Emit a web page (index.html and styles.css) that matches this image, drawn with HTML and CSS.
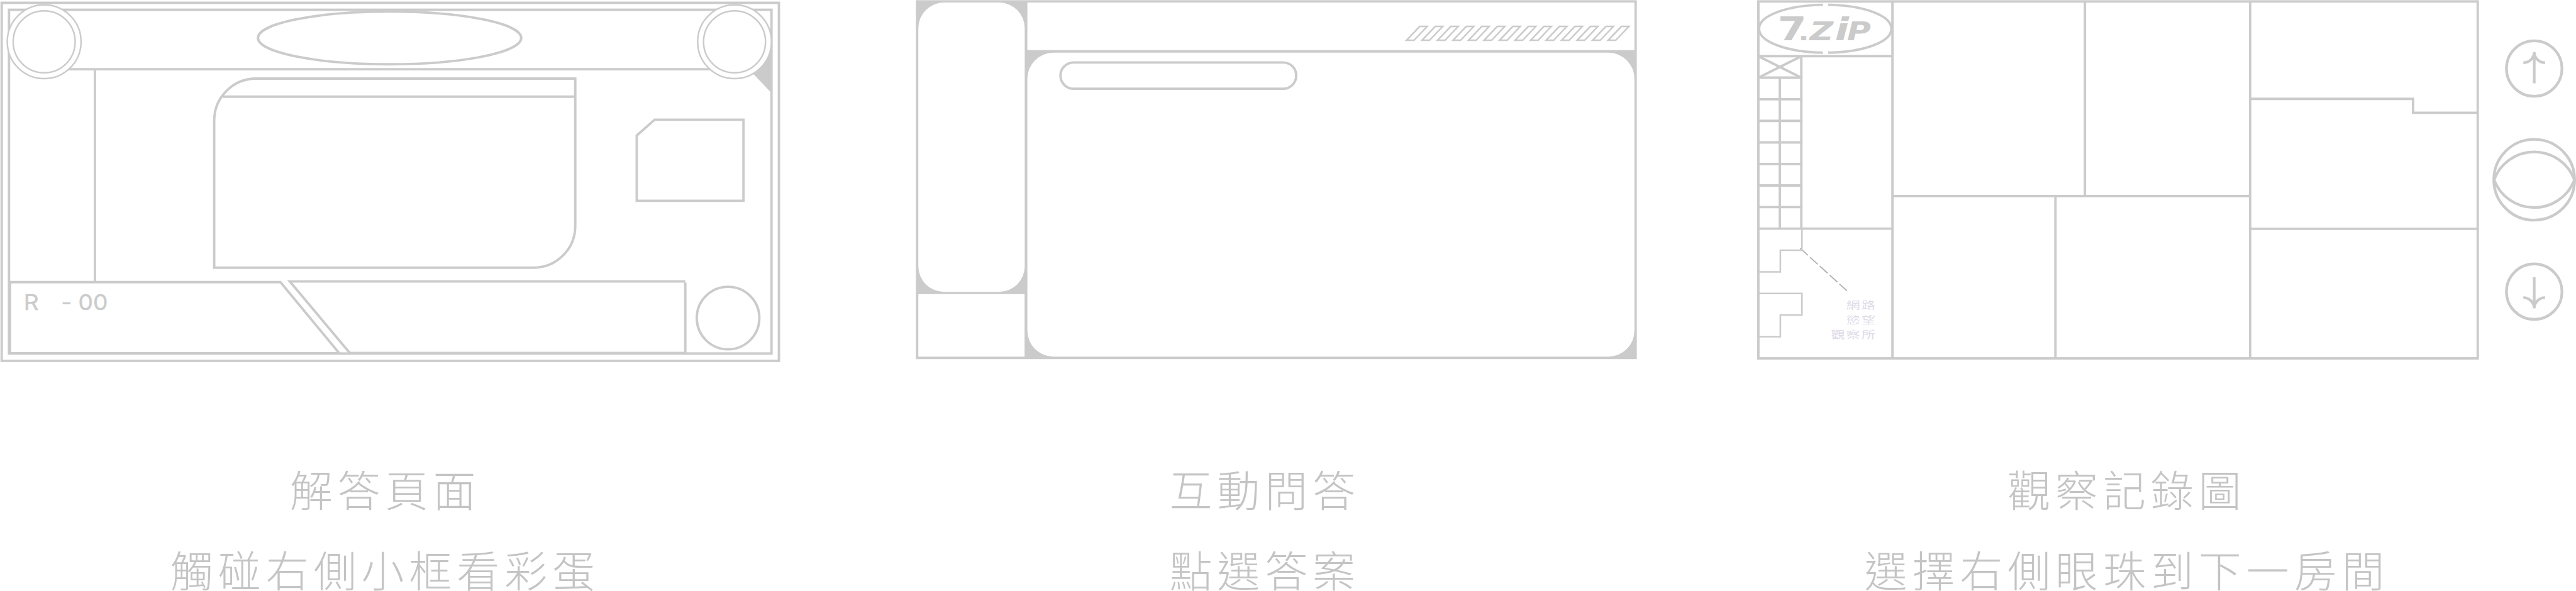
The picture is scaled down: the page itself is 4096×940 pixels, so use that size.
FILE: index.html
```
<!DOCTYPE html>
<html lang="zh-Hant">
<head>
<meta charset="utf-8">
<title>7.ZIP</title>
<link rel="stylesheet" href="styles.css">
</head>
<body>
<main class="guide">
  <figure class="step step-answer">
    <svg class="wire" viewBox="0 0 2078 820">
      <rect x="3.8" y="6.4" width="1763.6" height="812.6"/>
      <rect x="20.4" y="22.2" width="1730.1" height="780.2"/>
      <path d="M100 157.2H1667M215.3 157.2V640"/>
      <ellipse cx="884" cy="86.1" rx="298.7" ry="59.8"/>
      <path class="solid" d="M1680 137L1750 210.5V95Z"/>
      <g class="knob">
        <circle cx="100.2" cy="94.8" r="83.7"/><circle cx="100.2" cy="94.8" r="70.3"/>
        <circle cx="1666.7" cy="94.8" r="83.7"/><circle cx="1666.7" cy="94.8" r="70.3"/>
      </g>
      <path d="M486 607.5V274A95 95.6 0 0 1 581 178.4H1305.3V512.5A94.5 95 0 0 1 1211 607.5ZM506 219.4H1305"/>
      <path d="M1444.8 307.6L1485.5 271.6H1687V455.8H1444.8Z"/>
      <path d="M22.7 640.3H636.3L770 802H22.7Z"/>
      <path d="M1555 638.7H657.5L793.5 801H1555V641.5"/>
      <circle cx="1652" cy="721.8" r="71"/>
      <g class="room" transform="translate(54 703) scale(1.08 1)">
        <text><tspan x="0">R</tspan><tspan x="78.5">-</tspan><tspan x="114.500">0</tspan><tspan x="145.500">0</tspan></text>
      </g>
    </svg>
    <figcaption class="caption">解答頁面<br>觸碰右側小框看彩蛋</figcaption>
  </figure>

  <figure class="step step-quiz">
    <svg class="wire" viewBox="2078 0 1909 820">
      <rect class="solid" x="2078.4" y="0.5" width="1635.8" height="814.6"/>
      <g class="pane">
        <rect x="2084" y="5.8" width="241.4" height="656.5" rx="58"/>
        <rect x="2084" y="667.6" width="241" height="141.8"/>
        <rect x="2331.4" y="5.8" width="1377.4" height="108"/>
        <rect x="2331.4" y="119.6" width="1377.4" height="689.8" rx="59"/>
      </g>
      <rect x="2406.5" y="141.8" width="535" height="59.6" rx="29.8"/>
      <defs><path id="bar" d="M3191.6 91.4H3208.8L3238.6 60H3221.6Z"/></defs>
      <g class="bars">
        <use href="#bar"/><use href="#bar" x="35.2"/><use href="#bar" x="70.4"/><use href="#bar" x="105.6"/>
        <use href="#bar" x="140.8"/><use href="#bar" x="176"/><use href="#bar" x="211.2"/><use href="#bar" x="246.4"/>
        <use href="#bar" x="281.6"/><use href="#bar" x="316.8"/><use href="#bar" x="352"/><use href="#bar" x="387.2"/>
        <use href="#bar" x="422.4"/><use href="#bar" x="457.6"/>
      </g>
    </svg>
    <figcaption class="caption">互動問答<br>點選答案</figcaption>
  </figure>

  <figure class="step step-map">
    <svg class="wire" viewBox="3987 0 1858 820">
      <path class="swing" d="M4084.5 563.5L4190.7 660"/>
      <rect x="3989.7" y="3.3" width="1632.3" height="810.1"/>
      <path d="M4294 3.3V813.4M3989.7 127.3H4294M3989.7 519H4294M4087.2 127.3V519M4038.4 176.2V519"/>
      <path d="M3990 176.2H4087M3990 225.3H4087M3990 274.3H4087M3990 323.3H4087M3990 372.3H4087M3990 421H4087M3990 470H4087"/>
      <path d="M3990 127.8L4087 176.2M4087 127.8L3990 176.2"/>
      <path d="M4136 10.9C4056 12 3991.3 35 3991.3 65.2S4056 118.4 4136 119.5M4148 10.9C4228 12 4291.6 35 4291.6 65.2S4228 118.4 4148 119.5"/>
      <path class="stairs" d="M4088.6 519V568H4039.6V617.2H3990M3990 666.2H4088.6V715H4039.6V764.2H3990"/>
      <path d="M4294 445H5105.6M4730.7 3.3V445M5105.6 3.3V813.4M4663.8 445V813.4M5105.6 224.4H5475.3V256H5622M5105.6 519.3H5622"/>
      <g class="brand" transform="translate(4036 91.5) scale(1.3 1)">
        <text><tspan class="seven" x="-2">7</tspan><tspan class="dot" x="34">.</tspan><tspan class="slant" x="54">Z</tspan><tspan class="slant i" x="98">i</tspan><tspan class="slant" x="119">P</tspan></text>
      </g>
      <g class="sign" transform="translate(4258.5 0) scale(1.39 1)">
        <text y="701">網路</text><text y="734.3">慾望</text><text y="767.6">觀察所</text>
      </g>
      <g class="nav">
        <circle cx="5750.2" cy="155.6" r="63"/>
        <path d="M5750.2 189V118M5725.5 142.3A24.7 24.3 0 0 0 5750.2 118A24.7 24.3 0 0 0 5774.9 142.3"/>
        <circle cx="5750.2" cy="408" r="91.7"/>
        <path d="M5659 408A97.5 97.5 0 0 1 5841.5 408A97.5 97.5 0 0 1 5659 408"/>
        <circle cx="5750.2" cy="662" r="63"/>
        <path d="M5750.2 629V700M5725.5 675.5A24.7 24.3 0 0 1 5750.2 699.8A24.7 24.3 0 0 1 5774.9 675.5"/>
      </g>
    </svg>
    <figcaption class="caption">觀察記錄圖<br>選擇右側眼珠到下一房間</figcaption>
  </figure>
</main>
</body>
</html>
```
FILE: styles.css
```
body {
  margin: 0;
  background: #fff;
  overflow: hidden;
}

.guide {
  display: grid;
  grid-template-columns: 1456.2px 1337.8px 1302px;
  height: 940px;
  overflow: hidden;
}

.step {
  margin: 0;
}

.wire {
  display: block;
  width: 100%;
  overflow: visible;
  fill: none;
  stroke: #cbcbcb;
  stroke-width: 5.5;
}

.wire .solid {
  fill: #cbcbcb;
  stroke: none;
}

.wire .pane {
  fill: #fff;
  stroke: none;
}

.wire .knob {
  fill: #fff;
  stroke-width: 3.5;
}

.wire .bars,
.wire .stairs {
  stroke-width: 3.6;
}

.wire .nav {
  stroke-width: 6.2;
}

.wire .swing {
  stroke: #b0b0b0;
  stroke-width: 2.6;
  stroke-dasharray: 24 6.1;
}

.room {
  font: 400 49px Inter, sans-serif;
  fill: #cbcbcb;
  stroke: #cbcbcb;
  stroke-width: 0.6;
  stroke-linejoin: round;
}

.brand {
  font: 700 57px "DejaVu Sans", sans-serif;
  fill: #cbcbcb;
  stroke: none;
}

.brand .seven {
  font-size: 73px;
}

.brand .dot {
  font-size: 50px;
}

.brand .slant {
  font-style: oblique;
}

.brand .i {
  font-size: 72px;
}

.sign {
  font: 400 22.5px "Noto Sans CJK TC", sans-serif;
  letter-spacing: 2.45px;
  text-anchor: end;
  fill: #dddbe8;
  stroke: none;
}

.caption {
  margin-top: 138px;
  font: 300 68px/128.2px "Noto Sans CJK TC", sans-serif;
  letter-spacing: 7.9px;
  text-align: center;
  white-space: nowrap;
  color: #c4c4c4;
}

.step-answer .caption {
  width: 1225px;
}

.step-quiz .caption {
  width: 1110px;
}

.step-map .caption {
  width: 1176px;
}
```
